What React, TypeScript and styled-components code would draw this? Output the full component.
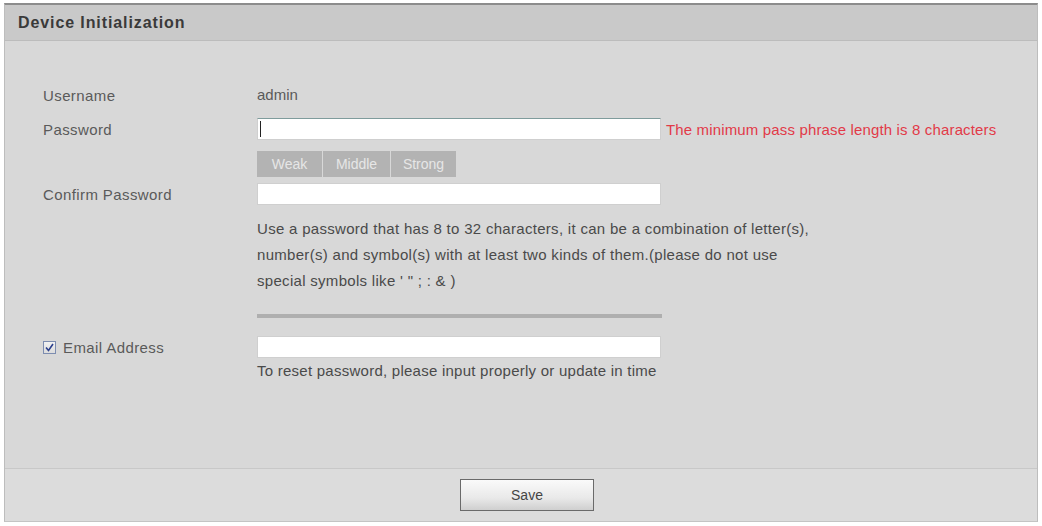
import styled, { createGlobalStyle } from "styled-components";

const GlobalStyle = createGlobalStyle`
  html, body {
    margin: 0;
    padding: 0;
    background: #ffffff;
  }
  body {
    font-family: "Liberation Sans", Arial, sans-serif;
  }
`;

const StyledPage = styled.div`
  width: 1042px;
  height: 526px;
  padding: 3px 4px 4px 4px;
  box-sizing: border-box;
  background: #ffffff;
`;

const StyledPanel = styled.div`
  height: 100%;
  display: flex;
  flex-direction: column;
  border-top: 2px solid #8c8c8c;
  border-left: 1px solid #bdbdbd;
  border-right: 1px solid #bdbdbd;
  border-bottom: 1px solid #c4c4c4;
  box-sizing: border-box;
`;

const StyledHeader = styled.div`
  height: 35px;
  display: flex;
  align-items: center;
  padding-left: 13px;
  background: #c9c9c9;
  border-bottom: 1px solid #bcbcbc;
  color: #3a3a3a;
  font-size: 16px;
  font-weight: bold;
  letter-spacing: 0.9px;
`;

const StyledBody = styled.div`
  flex: 1;
  background: #d8d8d8;
  padding: 43px 0 0 38px;
`;

const StyledRow = styled.div<{ $top: number }>`
  display: grid;
  grid-template-columns: 214px auto;
  align-items: center;
  margin-top: ${(p) => p.$top}px;
`;

const StyledLabel = styled.div`
  display: flex;
  align-items: center;
  gap: 7px;
  color: #5a5a5a;
  font-size: 15px;
  letter-spacing: 0.4px;
`;

const StyledValue = styled.div`
  color: #5a5a5a;
  font-size: 15px;
  line-height: 22px;
`;

const StyledField = styled.div`
  display: flex;
  align-items: center;
`;

const StyledInput = styled.div<{ $focused?: boolean }>`
  width: 404px;
  height: 22px;
  box-sizing: border-box;
  background: #ffffff;
  border: 1px solid #cfcfcf;
  border-top-color: ${(p) => (p.$focused ? "#7f9c9c" : "#cfcfcf")};
  display: flex;
  align-items: center;
  padding-left: 2px;
`;

const StyledCaret = styled.span`
  width: 1px;
  height: 16px;
  background: #222;
`;

const StyledError = styled.span`
  margin-left: 5px;
  color: #e23a48;
  font-size: 15px;
  letter-spacing: 0.15px;
  white-space: nowrap;
`;

const StyledStrength = styled.div`
  display: flex;
  gap: 1px;
`;

const StyledLevel = styled.div<{ $w: number }>`
  width: ${(p) => p.$w}px;
  height: 26px;
  background: #b3b3b3;
  color: #e6e6e6;
  font-size: 14px;
  display: flex;
  align-items: center;
  justify-content: center;
`;

const StyledHint = styled.div`
  color: #4a4a4a;
  font-size: 15px;
  line-height: 26px;
  letter-spacing: 0.3px;
  white-space: nowrap;
`;

const StyledBar = styled.div`
  width: 405px;
  height: 4px;
  background: #afafaf;
`;

const StyledNote = styled.div`
  color: #4a4a4a;
  font-size: 15px;
  line-height: 16px;
  letter-spacing: 0.25px;
`;

const StyledCheck = styled.span`
  width: 13px;
  height: 13px;
  box-sizing: border-box;
  border: 1px solid #7d8db0;
  background: linear-gradient(#f2f2f2, #dcdcdc);
  display: flex;
  align-items: center;
  justify-content: center;
`;

const StyledFooter = styled.div`
  height: 52px;
  background: #dcdcdc;
  border-top: 1px solid #c8c8c8;
  display: flex;
  align-items: center;
  justify-content: center;
  padding-left: 12px;
`;

const StyledButton = styled.button`
  width: 134px;
  height: 32px;
  border: 1px solid #6a6a6a;
  background: linear-gradient(#fafafa, #e9e9e9 60%, #cfcfcf);
  color: #454545;
  font-family: "Liberation Sans", Arial, sans-serif;
  font-size: 14px;
  padding: 0;
`;

const levels = [
  { title: "Weak", width: 65 },
  { title: "Middle", width: 67 },
  { title: "Strong", width: 65 },
];

const App = () => {
  return (
    <StyledPage>
      <GlobalStyle />
      <StyledPanel>
        <StyledHeader>Device Initialization</StyledHeader>
        <StyledBody>
          <StyledRow $top={0}>
            <StyledLabel>Username</StyledLabel>
            <StyledValue>admin</StyledValue>
          </StyledRow>
          <StyledRow $top={12}>
            <StyledLabel>Password</StyledLabel>
            <StyledField>
              <StyledInput $focused>
                <StyledCaret />
              </StyledInput>
              <StyledError>The minimum pass phrase length is 8 characters</StyledError>
            </StyledField>
          </StyledRow>
          <StyledRow $top={11}>
            <span />
            <StyledStrength>
              {levels.map((item) => (
                <StyledLevel key={item.title} $w={item.width}>
                  {item.title}
                </StyledLevel>
              ))}
            </StyledStrength>
          </StyledRow>
          <StyledRow $top={6}>
            <StyledLabel>Confirm Password</StyledLabel>
            <StyledInput />
          </StyledRow>
          <StyledRow $top={11}>
            <span />
            <StyledHint>
              Use a password that has 8 to 32 characters, it can be a combination of letter(s),
              <br />
              number(s) and symbol(s) with at least two kinds of them.(please do not use
              <br />
              special symbols like ' " ; : &amp; )
            </StyledHint>
          </StyledRow>
          <StyledRow $top={20}>
            <span />
            <StyledBar />
          </StyledRow>
          <StyledRow $top={18}>
            <StyledLabel>
              <StyledCheck>
                <svg width="9" height="9" viewBox="0 0 9 9">
                  <path d="M1 4.5 L3.5 7.5 L8 1" fill="none" stroke="#2b3f8c" strokeWidth="1.6" />
                </svg>
              </StyledCheck>
              Email Address
            </StyledLabel>
            <StyledInput />
          </StyledRow>
          <StyledRow $top={5}>
            <span />
            <StyledNote>To reset password, please input properly or update in time</StyledNote>
          </StyledRow>
        </StyledBody>
        <StyledFooter>
          <StyledButton>Save</StyledButton>
        </StyledFooter>
      </StyledPanel>
    </StyledPage>
  );
};

export default App;
